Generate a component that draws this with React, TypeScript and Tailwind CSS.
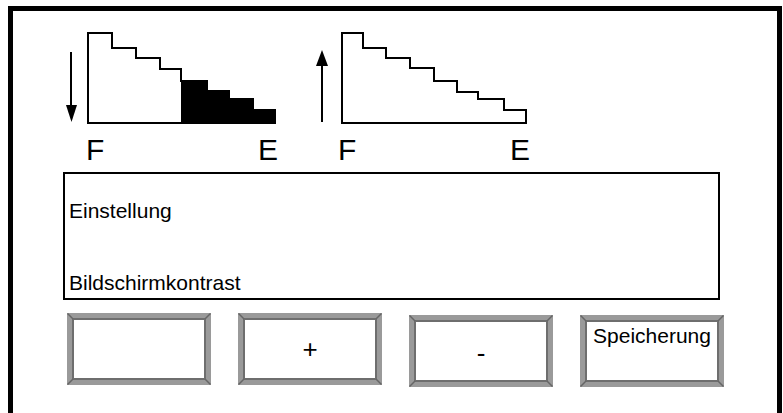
import React from "react";

const font = { fontFamily: '"Liberation Sans", Arial, sans-serif' };

function Bevel({ children, className = "" }: { children?: React.ReactNode; className?: string }) {
  return (
    <div className={`relative w-[144px] h-[72px] border-[5px] border-[#9a9a9a] bg-white ${className}`}>
      <div className="w-full h-full border-2 border-[#6e6e6e] bg-white flex">
        {children}
      </div>
      <svg className="absolute -inset-[5px] pointer-events-none" width="144" height="72" viewBox="0 0 144 72">
        <line x1="0.5" y1="0.5" x2="6" y2="6" stroke="#666" strokeWidth="1.5" />
        <line x1="143.5" y1="0.5" x2="138" y2="6" stroke="#666" strokeWidth="1.5" />
        <line x1="0.5" y1="71.5" x2="6" y2="66" stroke="#666" strokeWidth="1.5" />
        <line x1="143.5" y1="71.5" x2="138" y2="66" stroke="#666" strokeWidth="1.5" />
      </svg>
    </div>
  );
}

export default function App() {
  return (
    <div className="w-[783px] h-[413px] overflow-hidden bg-white" style={font}>
      <div className="ml-[8px] mt-[6px] w-[774px] h-[430px] border-[5px] border-black">
        {/* charts */}
        <div className="flex pt-[19px] pl-[47px] gap-[30px]">
          <svg width="220" height="96" viewBox="0 0 220 96">
            <line x1="11" y1="22" x2="11" y2="77" stroke="#000" strokeWidth="2" />
            <polygon points="6,75 17,75 11.5,92" fill="#000" />
            <polygon
              points="121,93 121,51 147,51 147,61 169,61 169,69 193,69 193,80 215,80 215,93"
              fill="#000"
            />
            <polygon
              points="28,93 28,3 52,3 52,18 76,18 76,28 100,28 100,39 121,39 121,51 147,51 147,61 169,61 169,69 193,69 193,80 215,80 215,93"
              fill="none"
              stroke="#000"
              strokeWidth="2"
            />
          </svg>
          <svg width="220" height="96" viewBox="0 0 220 96">
            <line x1="12" y1="34" x2="12" y2="92" stroke="#000" strokeWidth="2" />
            <polygon points="6,36 18,36 12,20" fill="#000" />
            <polygon
              points="32,93 32,3 53,3 53,18 76,18 76,28 100,28 100,38 124,38 124,51 147,51 147,62 168,62 168,69 194,69 194,80 216,80 216,93"
              fill="none"
              stroke="#000"
              strokeWidth="2"
            />
          </svg>
        </div>
        {/* labels */}
        <div className="flex mt-[9px] pl-[73px] text-[30px] leading-[30px] text-black">
          <span className="w-[172px]">F</span>
          <span className="w-[80px]">E</span>
          <span className="w-[172px]">F</span>
          <span>E</span>
        </div>
        {/* info box */}
        <div className="mt-[7px] ml-[50px] w-[657px] h-[128px] border-2 border-black flex flex-col pl-[4px] text-[21px] leading-[24px] text-black">
          <div className="mt-[25px]">Einstellung</div>
          <div className="mt-[48px]">Bildschirmkontrast</div>
        </div>
        {/* buttons */}
        <div className="flex items-start mt-[13px] ml-[54px] gap-[27px] text-[21px] leading-[24px] text-black">
          <Bevel />
          <Bevel>
            <div className="flex-1 flex items-center justify-center text-[26px]">+</div>
          </Bevel>
          <Bevel className="mt-[2px]">
            <div className="flex-1 flex items-center justify-center pt-[4px] text-[26px]">-</div>
          </Bevel>
          <Bevel className="mt-[2px]">
            <div className="flex-1 text-center pt-[2px]">Speicherung</div>
          </Bevel>
        </div>
      </div>
    </div>
  );
}
